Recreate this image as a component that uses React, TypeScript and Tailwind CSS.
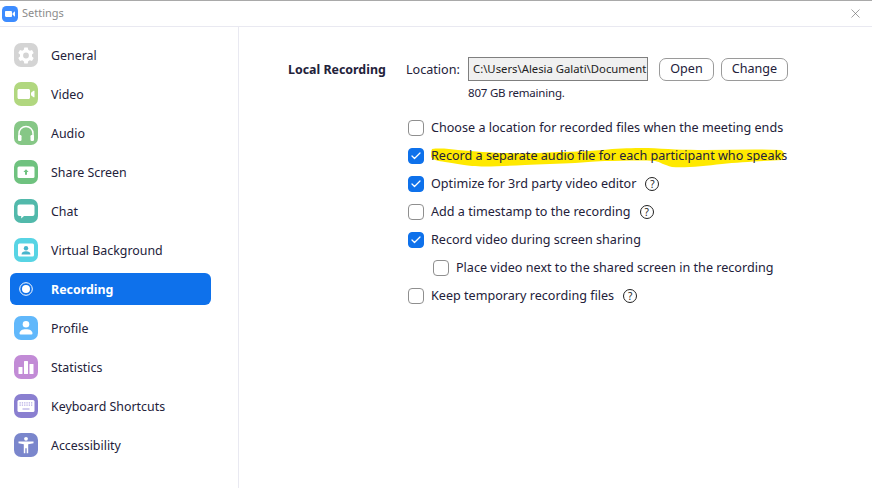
import React from "react";
import { Check, X } from "lucide-react";

type NavItem = { label: string; bg: string; icon: React.ReactNode };

const navItems: NavItem[] = [
  {
    label: "General",
    bg: "bg-[#d4d4d4]",
    icon: (
      <path
        fill="#fff"
        fillRule="evenodd"
        d="M10.3 4.6h3.4l.5 2.2 1.6.9 2.2-.7 1.7 2.9-1.7 1.5v2.2l1.7 1.5-1.7 2.9-2.2-.7-1.6.9-.5 2.2h-3.4l-.5-2.2-1.6-.9-2.2.7-1.7-2.9 1.7-1.5v-2.2L4.3 9.9 6 7l2.2.7 1.6-.9zM12 9.6a2.9 2.9 0 1 0 0 5.8 2.9 2.9 0 0 0 0-5.8z"
      />
    ),
  },
  {
    label: "Video",
    bg: "bg-[#b1d77f]",
    icon: <path fill="#fff" d="M3.500 8.500C3.500 7.700 4.200 7 5 7h9.500c.8 0 1.500.7 1.500 1.500v7c0 .8-.7 1.500-1.500 1.500H5c-.8 0-1.500-.7-1.500-1.500zM17 10.800l2.500-2h1v6.400h-1l-2.500-2z" />,
  },
  {
    label: "Audio",
    bg: "bg-[#86c786]",
    icon: (
      <>
        <path fill="none" stroke="#fff" strokeWidth="1.500" d="M5 16v-3.500a7 7 0 0 1 14 0V16" />
        <rect x="4" y="14" width="3.500" height="6" rx="1.200" fill="#fff" />
        <rect x="16.500" y="14" width="3.500" height="6" rx="1.200" fill="#fff" />
      </>
    ),
  },
  {
    label: "Share Screen",
    bg: "bg-[#6fc27f]",
    icon: (
      <>
        <rect x="3.500" y="6.500" width="17" height="11.500" rx="1.500" fill="#fff" />
        <path fill="#6fc27f" d="M12 9.200l2.600 2.700h-1.600v2.900h-2v-2.900H9.400z" />
      </>
    ),
  },
  {
    label: "Chat",
    bg: "bg-[#52b9ab]",
    icon: <path fill="#fff" d="M5.500 5.500h13A2 2 0 0 1 20.500 7.500v7.500a2 2 0 0 1-2 2H10l-2.800 2.500V17H5.500a2 2 0 0 1-2-2V7.500a2 2 0 0 1 2-2z" />,
  },
  {
    label: "Virtual Background",
    bg: "bg-[#58d4e4]",
    icon: (
      <>
        <rect x="4" y="5.500" width="16" height="13" rx="1.500" fill="#fff" />
        <circle cx="12" cy="10.300" r="2.200" fill="#47b5cc" />
        <path fill="#47b5cc" d="M7.500 16.500c0-2.200 2-3.300 4.500-3.300s4.500 1.100 4.500 3.300z" />
      </>
    ),
  },
  { label: "Recording", bg: "", icon: null },
  {
    label: "Profile",
    bg: "bg-[#61b8fb]",
    icon: (
      <>
        <circle cx="12" cy="8.300" r="3.300" fill="#fff" />
        <path fill="#fff" d="M5.500 17.500c0-2.800 2.800-4.300 6.500-4.300s6.500 1.500 6.500 4.300c0 .6-.4.900-1 .9h-11c-.6 0-1-.3-1-.9z" />
      </>
    ),
  },
  {
    label: "Statistics",
    bg: "bg-[#c28bd6]",
    icon: (
      <>
        <rect x="4.500" y="12" width="4" height="7" rx=".5" fill="#fff" />
        <rect x="10" y="6" width="4" height="13" rx=".5" fill="#fff" />
        <rect x="15.500" y="9" width="4" height="10" rx=".5" fill="#fff" />
      </>
    ),
  },
  {
    label: "Keyboard Shortcuts",
    bg: "bg-[#8a7fd0]",
    icon: (
      <>
        <rect x="3.500" y="6" width="17" height="12" rx="1.500" fill="#fff" />
        <path stroke="#b5ace4" strokeWidth="1.200" strokeDasharray="1.300 1" d="M5.500 8.800h13M5.500 11.200h13" />
        <path stroke="#b5ace4" strokeWidth="1.200" d="M8.500 15h7" />
      </>
    ),
  },
  {
    label: "Accessibility",
    bg: "bg-[#7a86cc]",
    icon: (
      <>
        <circle cx="12" cy="5.800" r="1.900" fill="#fff" />
        <path fill="#fff" d="M4.500 8.500h15v1.700l-5.300 1v9h-1.500v-5h-1.400v5H9.800v-9l-5.300-1z" />
      </>
    ),
  },
];

const options = [
  { label: "Choose a location for recorded files when the meeting ends", checked: false },
  { label: "Record a separate audio file for each participant who speaks", checked: true, marked: true },
  { label: "Optimize for 3rd party video editor", checked: true, help: true },
  { label: "Add a timestamp to the recording", checked: false, help: true },
  { label: "Record video during screen sharing", checked: true },
  { label: "Place video next to the shared screen in the recording", checked: false, nested: true },
  { label: "Keep temporary recording files", checked: false, help: true },
];

function ZoomLogo() {
  return (
    <svg width="16" height="16" viewBox="0 0 16 16" className="shrink-0">
      <rect width="16" height="16" rx="4.500" fill="#3d8cff" />
      <path fill="#fff" d="M3 5.800c0-.4.300-.8.800-.8h5c.7 0 1.200.5 1.200 1.200v4c0 .4-.4.800-.8.800h-5C3.500 11 3 10.500 3 9.800zM10.600 7.300L13 5.300v5.400L10.600 8.700z" />
    </svg>
  );
}

function HelpIcon() {
  return (
    <span className="ml-[9px] flex h-[14px] w-[14px] items-center justify-center rounded-full border border-[#222] text-[10px] leading-none text-[#222]">
      ?
    </span>
  );
}

// marker stroke, drawn in the reference's page coordinates
function Highlighter() {
  return (
    <svg width="362" height="24" viewBox="431 146 362 24" className="absolute left-0 top-0">
      <path
        fill="#ffe900"
        d="M432 148C440 147 450 148 458 149C475 150 490 152 508 152C525 153 540 152 558 151C575 151 595 150 612 148C625 147 638 147 648 147C665 148 685 149 705 149C730 149 755 148 781 149C785 151 785 156 782 159C765 160 740 161 722 163C705 165 685 167 672 166C664 164 660 161 655 160C640 159 620 160 605 160C590 161 585 161 575 162C560 163 540 163 525 164C505 165 485 166 472 165C460 164 455 162 445 161C438 160 433 159 431 156C431 153 431 150 432 148z"
      />
    </svg>
  );
}

export default function App() {
  return (
    <div className="flex h-[488px] w-[872px] flex-col overflow-hidden bg-white font-['Noto_Sans',sans-serif] text-[12.600px] text-[#23213a]">
      <div className="flex h-[27px] items-center gap-[4px] border-b border-b-[#e9e9f1] border-t border-t-[#a9a9a9] pl-[2px] pr-[9px]">
        <ZoomLogo />
        <span className="text-[11px] text-[#8b8b8b]">Settings</span>
        <X className="ml-auto text-[#666]" size={15} strokeWidth={1} />
      </div>

      <div className="flex flex-1">
        <aside className="flex w-[239px] flex-col gap-[7px] border-r border-[#e9e9f1] pl-[10px] pr-[27px] pt-[12px] text-[12.400px]">
          {navItems.map((item) =>
            item.label === "Recording" ? (
              <div key={item.label} className="flex h-[32px] items-center rounded-[6px] bg-[#0e71eb] pl-[9px] font-bold text-white">
                <svg width="14" height="14" viewBox="0 0 14 14" className="mr-[18px]">
                  <circle cx="7" cy="7" r="6.300" fill="none" stroke="#fff" strokeWidth="1" />
                  <circle cx="7" cy="7" r="4" fill="#fff" />
                </svg>
                <span className="pt-[2px]">{item.label}</span>
              </div>
            ) : (
              <div key={item.label} className="flex h-[32px] items-center pl-[4px] font-normal">
                <span className={`mr-[13px] flex h-[24px] w-[24px] items-center justify-center rounded-[7px] ${item.bg}`}>
                  <svg width="24" height="24" viewBox="0 0 24 24">
                    {item.icon}
                  </svg>
                </span>
                <span className="pt-[2px]">{item.label}</span>
              </div>
            ),
          )}
        </aside>

        <main className="flex-1 pl-[49px] pt-[30px]">
          <div className="flex">
            <div className="w-[118px] pt-[2px] text-[12.400px] font-bold leading-[22px]">Local Recording</div>
            <div className="flex flex-col">
              <div className="flex h-[24px] items-center">
                <span className="w-[62px] pt-[3px]">Location:</span>
                <div className="flex h-[24px] w-[180px] items-center overflow-hidden whitespace-nowrap border border-[#7f7f7f] bg-[#f0f0f0] pb-[1px] pl-[4px] pt-[2px] text-[11.300px] text-[#222]">
                  C:\Users\Alesia Galati\Document
                </div>
                <button className="ml-[11px] h-[23px] w-[55px] rounded-[7px] border border-[#9a9a9a] bg-white pt-[1px]">Open</button>
                <button className="ml-[7px] h-[23px] w-[67px] rounded-[7px] border border-[#9a9a9a] bg-white pt-[1px]">Change</button>
              </div>
              <div className="ml-[62px] mt-[3px] text-[11.500px] leading-[18px] tracking-[-0.2px]">807 GB remaining.</div>
            </div>
          </div>

          <div className="ml-[120px] mt-[12px] flex flex-col">
            {options.map((opt) => (
              <div key={opt.label} className={`flex h-[28px] items-center ${opt.nested ? "pl-[25px]" : ""}`}>
                <span
                  className={`mr-[7px] flex h-[16px] w-[16px] items-center justify-center rounded-[4px] border ${
                    opt.checked ? "border-[#0e71eb] bg-[#0e71eb]" : "border-[#8f8f8f] bg-white"
                  }`}
                >
                  {opt.checked && <Check size={12} color="#fff" strokeWidth={2.5} />}
                </span>
                <span className="relative whitespace-nowrap">
                  {opt.marked && <Highlighter />}
                  <span className="relative">{opt.label}</span>
                </span>
                {opt.help && <HelpIcon />}
              </div>
            ))}
          </div>
        </main>
      </div>
    </div>
  );
}
